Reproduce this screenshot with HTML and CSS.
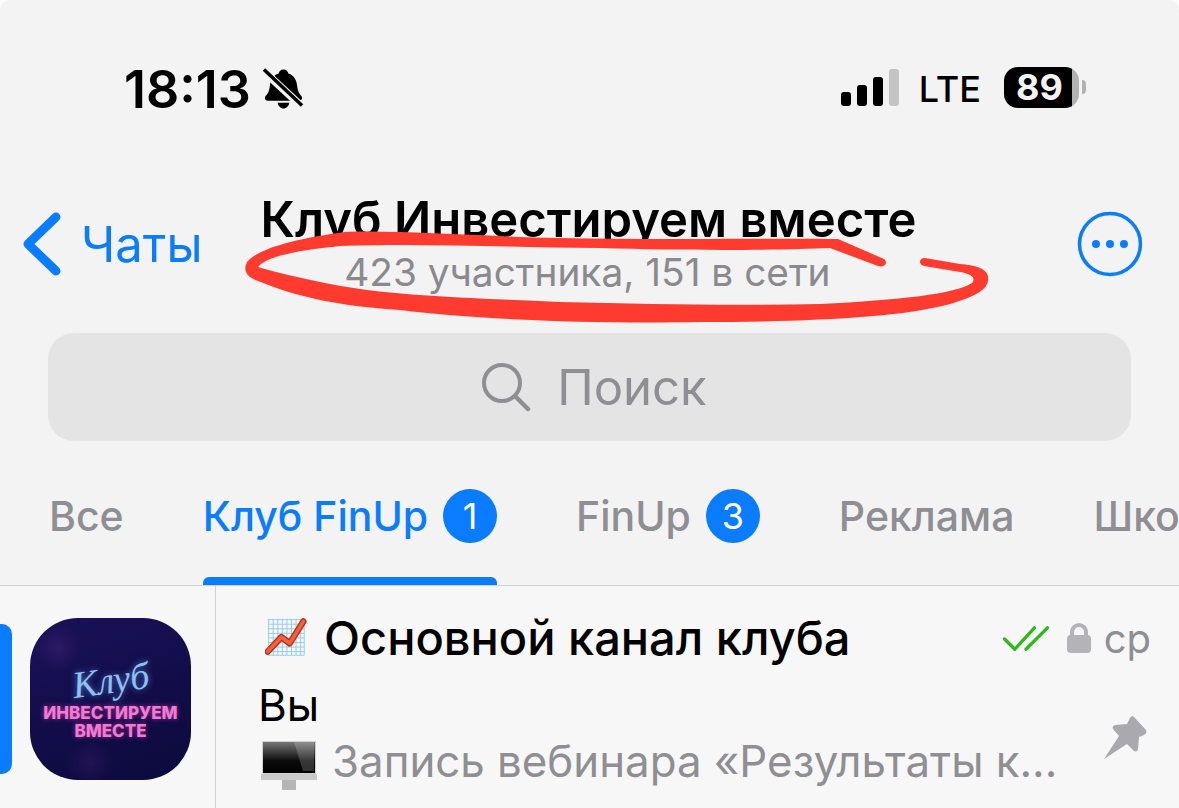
FILE: index.html
```html
<!DOCTYPE html>
<html lang="en">
<head>
    <meta charset="UTF-8">
    <meta name="viewport" content="width=device-width, initial-scale=1.0">
    <title>Клуб Инвестируем вместе</title>
    <link rel="stylesheet" href="styles.css">
</head>
<body>
    <div class="screen">
        <div class="status-bar">
            <div class="status-left">
                <span class="time">18:13</span>
                <svg class="bell" viewBox="0 0 42 42" width="41" height="42">
                    <path d="M21 1c3 0 4.500 2 5 4 6 2 8.500 7 9 13 .5 5 2 8 4 10 2 2 1 5-2 5H5c-3 0-4-3-2-5 2-2 3.500-5 4-10 .5-6 3-11 9-13 .5-2 2-4 5-4zM15 35h12c-.5 3-3 6-6 6s-5.500-3-6-6z" fill="#000"/>
                    <path d="M1 3l40 37" stroke="#f3f3f3" stroke-width="8"/>
                    <path d="M1 1l39 37" stroke="#000" stroke-width="3.500"/>
                </svg>
            </div>
            <div class="status-right">
                <div class="signal">
                    <i class="bar bar-1"></i>
                    <i class="bar bar-2"></i>
                    <i class="bar bar-3"></i>
                    <i class="bar bar-4"></i>
                </div>
                <span class="lte">LTE</span>
                <div class="battery">89</div>
                <i class="battery-nub"></i>
            </div>
        </div>

        <div class="nav-bar">
            <a class="back">
                <svg viewBox="0 0 42 66" width="42" height="66">
                    <path d="M36 6L8 33l28 27" fill="none" stroke="#0a7cff" stroke-width="9" stroke-linecap="round" stroke-linejoin="round"/>
                </svg>
                <span>Чаты</span>
            </a>
            <div class="nav-title">
                <h1>Клуб Инвестируем вместе</h1>
                <p>423 участника, 151 в сети</p>
            </div>
            <svg class="more" viewBox="0 0 66 66" width="66" height="66">
                <circle cx="33" cy="33" r="30.500" fill="none" stroke="#0a7cff" stroke-width="3.500"/>
                <circle cx="19" cy="33" r="4" fill="#0a7cff"/>
                <circle cx="33" cy="33" r="4" fill="#0a7cff"/>
                <circle cx="47" cy="33" r="4" fill="#0a7cff"/>
            </svg>
        </div>

        <div class="search">
            <svg viewBox="0 0 50 50" width="50" height="50">
                <circle cx="21" cy="21" r="18" fill="none" stroke="#8e8e93" stroke-width="4"/>
                <path d="M34 34l13 13" stroke="#8e8e93" stroke-width="4.500" stroke-linecap="round"/>
            </svg>
            <span>Поиск</span>
        </div>

        <div class="tabs">
            <div class="tab">Все</div>
            <div class="tab active">Клуб FinUp <b class="count">1</b></div>
            <div class="tab">FinUp <b class="count">3</b></div>
            <div class="tab">Реклама</div>
            <div class="tab">Школа</div>
        </div>

        <div class="chat-row">
            <i class="pinned-mark"></i>
            <div class="avatar">
                <span class="avatar-script">Клуб</span>
                <span class="avatar-name">ИНВЕСТИРУЕМ<br>ВМЕСТЕ</span>
            </div>
            <div class="chat-body">
                <div class="chat-top">
                    <svg class="emoji-chart" viewBox="0 0 46 42" width="42" height="40">
                        <path d="M3 2h40M3 7h40M3 12h40M3 17h40M3 22h40M3 27h40M3 32h40M3 37h40M3 41h40M4 1v40M9 1v40M14 1v40M19 1v40M24 1v40M29 1v40M34 1v40M39 1v40M43 1v40" stroke="#8fcbe8" stroke-width="1"/>
                        <path d="M3 37l15-16 9 7 15-24" fill="none" stroke="#b5301c" stroke-width="7" stroke-linecap="round" stroke-linejoin="round"/>
                        <path d="M3 37l15-16 9 7 15-24" fill="none" stroke="#f2603c" stroke-width="4" stroke-linecap="round" stroke-linejoin="round"/>
                    </svg>
                    <span class="chat-name">Основной канал клуба</span>
                    <svg class="checks" viewBox="0 0 50 30" width="48" height="28">
                        <path d="M2 15l11 11L34 3M25 26L48 3" fill="none" stroke="#2fb81a" stroke-width="3.500" stroke-linecap="round" stroke-linejoin="round"/>
                    </svg>
                    <svg class="lock" viewBox="0 0 24 30" width="24" height="30">
                        <path d="M5 13V9a7 7 0 0 1 14 0v4" fill="none" stroke="#b3b3b8" stroke-width="4"/>
                        <rect x="0" y="12" width="24" height="18" rx="4" fill="#b3b3b8"/>
                    </svg>
                    <span class="chat-date">ср</span>
                </div>
                <div class="chat-sender">Вы</div>
                <div class="chat-preview">
                    <svg class="emoji-imac" viewBox="0 0 56 49" width="56" height="49">
                        <defs>
                            <linearGradient id="imacScreen" x1="0" y1="0" x2="0" y2="1">
                                <stop offset="0" stop-color="#777"/>
                                <stop offset="0.6" stop-color="#0c0c0c"/>
                                <stop offset="1" stop-color="#000"/>
                            </linearGradient>
                        </defs>
                        <rect x="1" y="0" width="54" height="33" fill="#d0d0d0"/>
                        <rect x="2" y="1" width="52" height="31" fill="url(#imacScreen)"/>
                        <path d="M33 1h20v29H42z" fill="#fff" opacity="0.18"/>
                        <rect x="0" y="33" width="56" height="6" fill="#c9c9c9"/>
                        <rect x="21" y="39" width="14" height="10" fill="#b5b5b5"/>
                    </svg>
                    <span>Запись вебинара «Результаты к...</span>
                    <svg class="pin" viewBox="0 0 44 44" width="44" height="44">
                        <path d="M31 1l12 13c1 2 0 4-2 5l-5 2-1 12c0 2-2 3-4 2l-7-7L1 43l15-23-6-7c-1-2 0-3 2-4l12-1 3-6c1-2 3-2 4-1z" fill="#a9a9ae"/>
                    </svg>
                </div>
            </div>
        </div>

        <!-- hand drawn mark over the subtitle -->
        <svg class="scribble" viewBox="0 0 1179 808" width="1179" height="808">
            <path d="M884 259L838 239C780 238 660 240 560 238C470 236 400 230 345 232C300 238 258 248 247 262C243 270 246 277 258 281C300 298 340 306 400 310C480 320 600 324 700 322C800 322 900 318 950 304C975 296 990 290 988 276C986 268 975 265 960 264L925 258C919 258 918 264 924 266L960 272C972 274 976 278 972 283C955 294 900 300 820 304C730 306 650 304 560 302C470 298 390 296 330 284C300 278 275 272 258 267C266 256 300 250 340 246C420 243 500 247 600 248C700 251 780 250 830 248L878 266C886 268 888 262 884 259Z" fill="#ff3b30"/>
        </svg>
    </div>
</body>
</html>
```

FILE: styles.css
```css
* {
    margin: 0;
    padding: 0;
    box-sizing: border-box;
}

body {
    background: #fbfbfb;
    font-family: Inter, "Noto Sans", sans-serif;
    overflow: hidden;
}

.screen {
    position: relative;
    width: 1179px;
    height: 808px;
    overflow: hidden;
    background: #f3f3f3;
    border-radius: 10px 10px 0 0;
}

/* Status bar */
.status-bar {
    height: 180px;
    padding: 64px 93px 0 124px;
    display: flex;
    justify-content: space-between;
    align-items: flex-start;
}

.status-left {
    display: flex;
    align-items: center;
    gap: 12px;
    height: 50px;
}

.time {
    font-size: 52px;
    font-weight: 600;
    color: #000;
}

.status-right {
    display: flex;
    align-items: center;
    height: 52px;
    margin-top: -3px;
}

.signal {
    display: flex;
    align-items: flex-end;
    gap: 6px;
    height: 38px;
}

.bar {
    display: block;
    width: 10px;
    background: #000;
    border-radius: 3px;
}
.bar-1 { height: 14px; }
.bar-2 { height: 21px; }
.bar-3 { height: 29px; }
.bar-4 { height: 37px; background: #c4c4c4; }

.lte {
    margin: 3px 0 0 20px;
    font-size: 36px;
    font-weight: 500;
    color: #000;
}

.battery {
    margin-left: 23px;
    width: 75px;
    height: 41px;
    border-radius: 14px;
    background: linear-gradient(90deg, #000 91%, #b2b2b2 91%);
    color: #f3f3f3;
    font-size: 36px;
    font-weight: 700;
    line-height: 41px;
    padding-left: 12px;
}

.battery-nub {
    display: block;
    width: 4px;
    height: 14px;
    margin-left: 3px;
    background: #b2b2b2;
    border-radius: 0 7px 7px 0;
}

/* Nav bar */
.nav-bar {
    height: 153px;
    padding: 0 36px 0 20px;
    display: flex;
    align-items: flex-start;
}

.back {
    width: 240px;
    height: 66px;
    margin-top: 31px;
    display: flex;
    align-items: center;
    gap: 19px;
    color: #0a7cff;
    font-size: 49px;
}

.nav-title {
    width: 658px;
    text-align: center;
}

.nav-title h1 {
    font-size: 49px;
    font-weight: 600;
    line-height: 56px;
    margin-top: 12px;
    color: #000;
    white-space: nowrap;
}

.nav-title p {
    font-size: 38.800px;
    line-height: 42px;
    margin: 3px 0 0 -2px;
    color: #8a8a8e;
    white-space: nowrap;
}

.more {
    margin-left: 160px;
    margin-top: 31px;
}

/* Search */
.search {
    margin: 0 48px;
    height: 108px;
    padding-left: 9px;
    background: #e4e4e5;
    border-radius: 26px;
    display: flex;
    align-items: center;
    justify-content: center;
    gap: 26px;
    color: #8e8e93;
    font-size: 49px;
}

/* Tabs */
.tabs {
    height: 145px;
    padding-left: 49px;
    display: flex;
    gap: 79px;
    border-bottom: 1px solid #d2d2d4;
    overflow: hidden;
    white-space: nowrap;
}

.tab {
    position: relative;
    height: 144px;
    padding-top: 48px;
    font-size: 41px;
    font-weight: 500;
    line-height: 54px;
    color: #8e8e93;
}

.tab.active {
    color: #0a7cff;
}

.tab.active::after {
    content: '';
    position: absolute;
    left: 0;
    right: 0;
    bottom: 0;
    height: 8px;
    background: #0a7cff;
    border-radius: 6px 6px 0 0;
}

.count {
    display: inline-block;
    width: 54px;
    height: 54px;
    margin-left: 4px;
    border-radius: 50%;
    background: #0a7cff;
    color: #fff;
    font-size: 36px;
    font-weight: 400;
    line-height: 54px;
    text-align: center;
    vertical-align: top;
}

/* Chat row */
.chat-row {
    height: 222px;
    background: #f7f7f7;
    display: flex;
    align-items: flex-start;
}

.pinned-mark {
    display: block;
    width: 12px;
    height: 150px;
    margin-top: 38px;
    background: #0a7cff;
    border-radius: 0 10px 10px 0;
}

.avatar {
    width: 161px;
    height: 162px;
    margin: 32px 24px 0 18px;
    border-radius: 48px;
    background:
        radial-gradient(circle at 28px 30px, rgba(110, 50, 150, 0.25), transparent 24px),
        radial-gradient(circle at 60px 145px, rgba(110, 50, 150, 0.2), transparent 24px),
        linear-gradient(160deg, #1a1158, #0b0a3c);
    display: flex;
    flex-direction: column;
    align-items: center;
    justify-content: center;
    text-align: center;
}

.avatar-script {
    font-family: "Liberation Serif", serif;
    font-style: italic;
    font-size: 38px;
    line-height: 44px;
    color: #8fc0ee;
    text-shadow: 0 0 6px rgba(90, 160, 255, 0.7);
    transform: rotate(-8deg);
}

.avatar-name {
    margin-top: 2px;
    font-size: 17px;
    font-weight: 800;
    line-height: 18px;
    color: #ee7cd0;
    text-shadow: 0 0 5px rgba(238, 60, 190, 0.7);
}

.chat-body {
    flex: 1;
    height: 222px;
    border-left: 1px solid #d2d2d4;
    padding: 26px 28px 0 45px;
}

.chat-top {
    display: flex;
    align-items: center;
    height: 50px;
}

.emoji-chart {
    margin-left: 4px;
}

.chat-name {
    flex: 1;
    margin-left: 17px;
    font-size: 47px;
    font-weight: 500;
    color: #000;
    white-space: nowrap;
}

.checks {
    margin-top: 3px;
}

.lock {
    margin: 2px 0 0 17px;
}

.chat-date {
    margin: 2px 0 0 13px;
    font-size: 40px;
    color: #8e8e93;
}

.chat-sender {
    margin: 18px 0 0 -3px;
    font-size: 44px;
    line-height: 50px;
    color: #000;
}

.chat-preview {
    display: flex;
    align-items: center;
    height: 54px;
    margin-top: 4px;
    font-size: 43.800px;
    color: #8e8e93;
    white-space: nowrap;
}

.emoji-imac {
    margin-top: 9px;
}

.chat-preview span {
    flex: 1;
    margin-left: 15px;
}

.pin {
    margin: -46px 4px 0 0;
}

.scribble {
    position: absolute;
    top: 0;
    left: 0;
    pointer-events: none;
}
```
